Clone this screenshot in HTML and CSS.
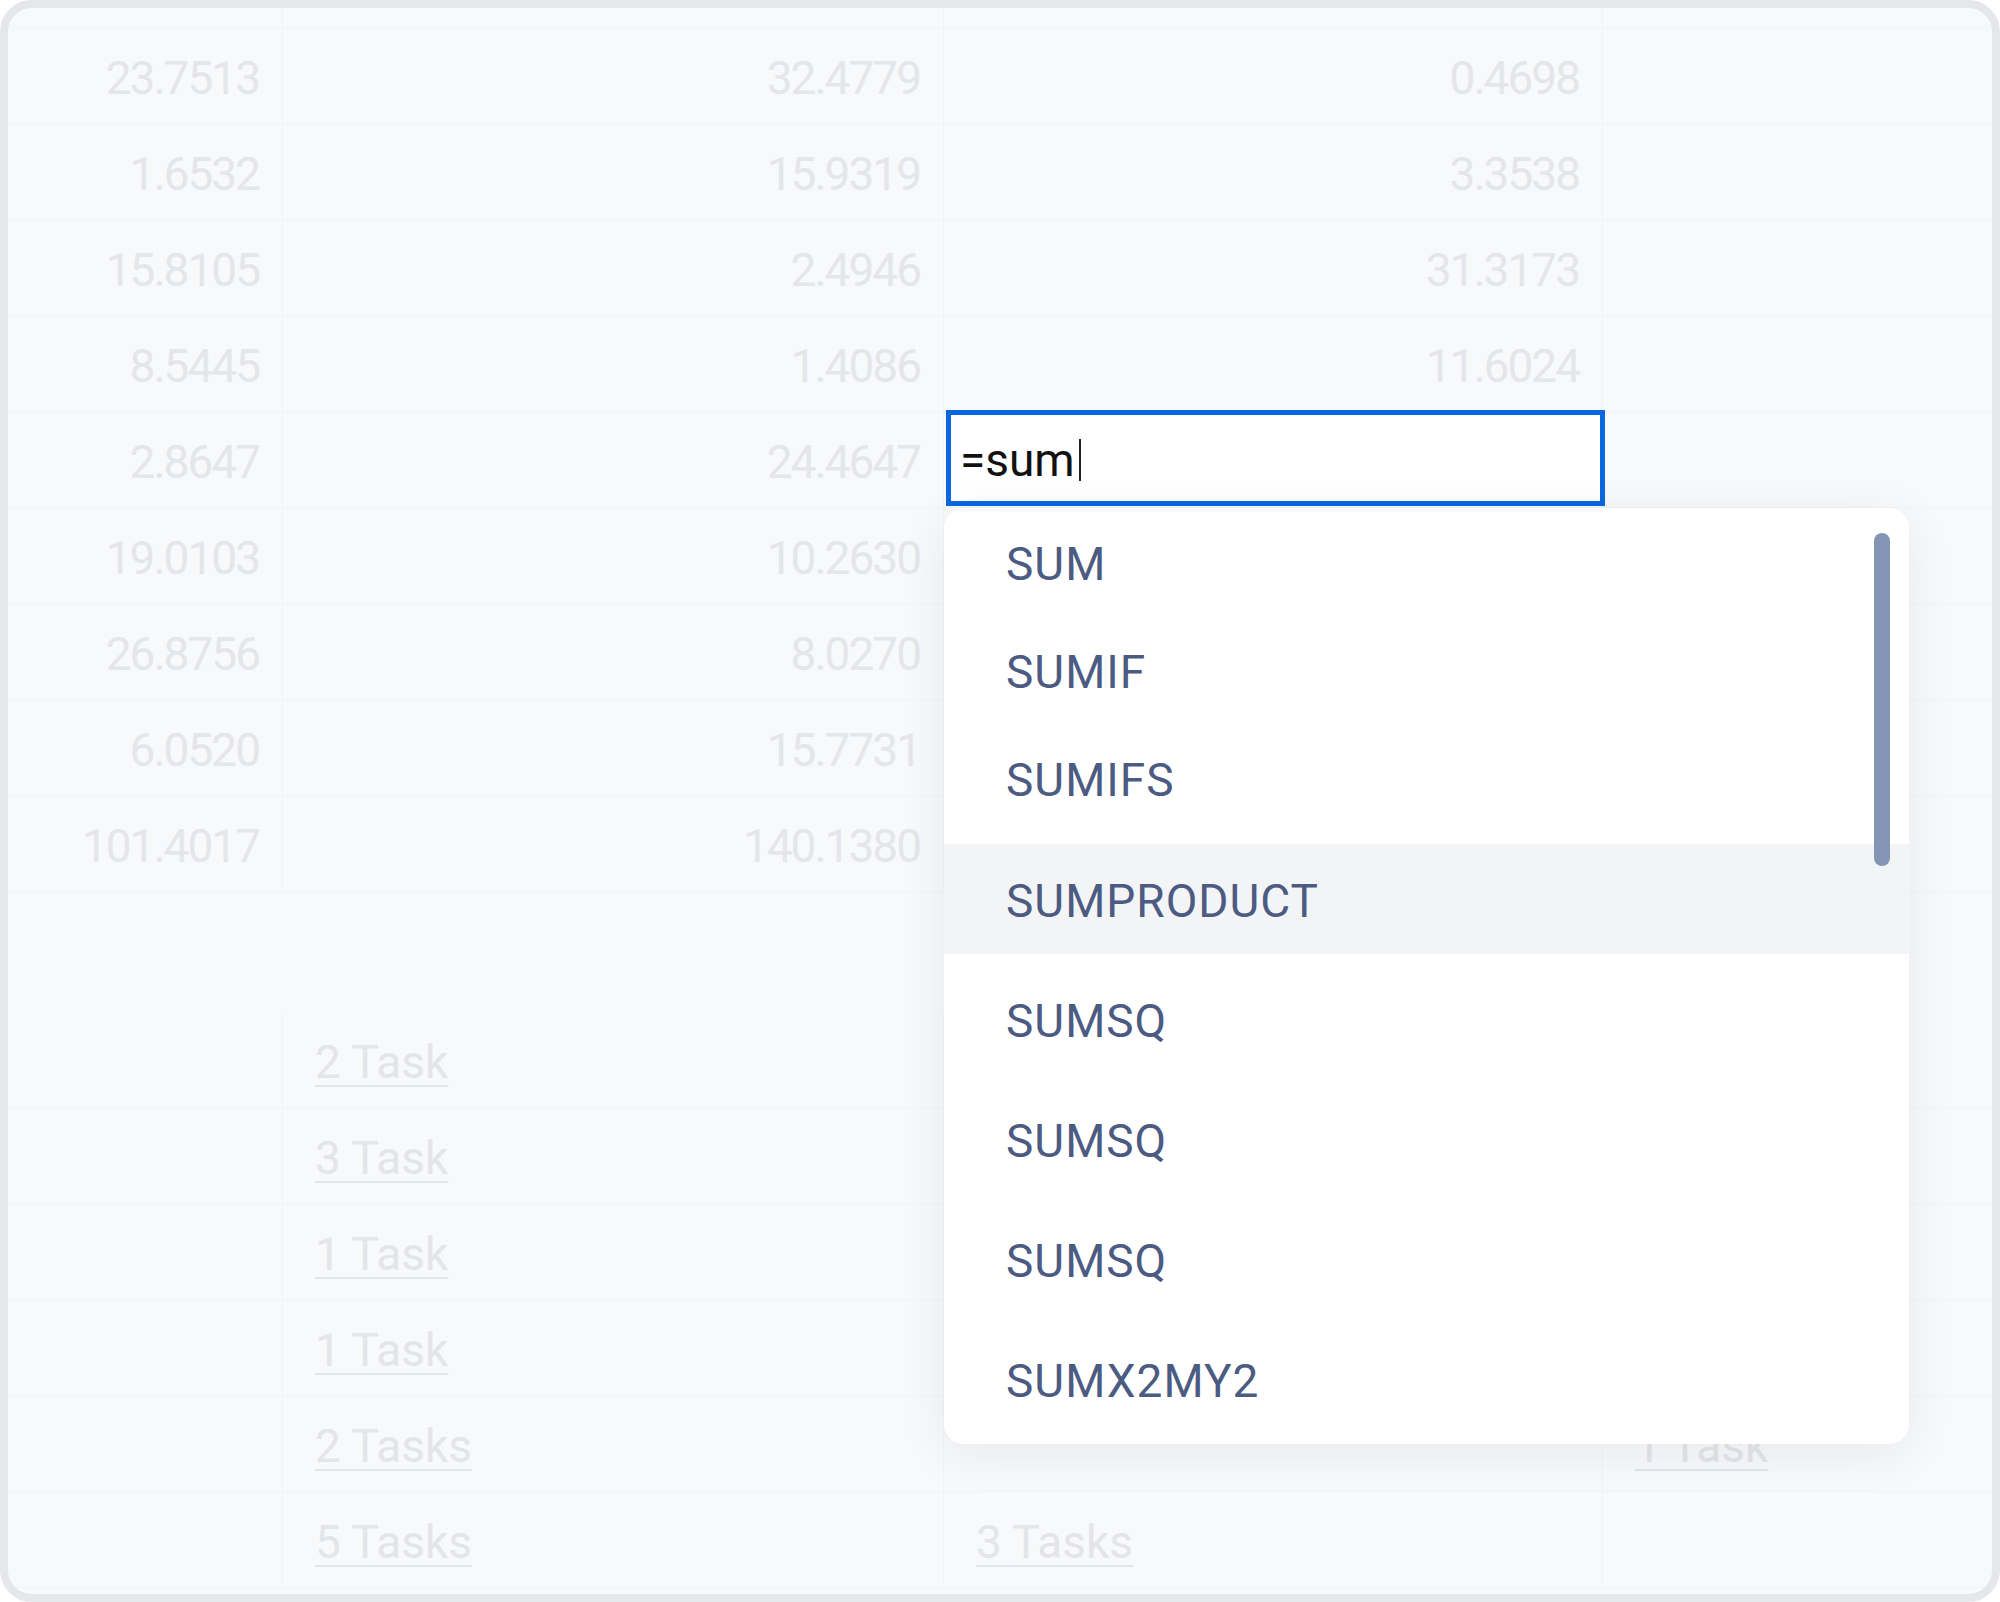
FILE: index.html
```html
<!DOCTYPE html>
<html lang="en">
<head>
    <meta charset="UTF-8">
    <meta name="viewport" content="width=device-width, initial-scale=1.0">
    <title>Sheet - formula suggest</title>
    <link rel="stylesheet" href="styles.css">
</head>
<body>
    <div class="frame">
        <div class="sheet">
            <div class="row row-cut">
                <div class="cell"></div><div class="cell"></div><div class="cell"></div><div class="cell"></div>
            </div>
            <div class="row">
                <div class="cell num">23.7513</div><div class="cell num">32.4779</div><div class="cell num">0.4698</div><div class="cell"></div>
            </div>
            <div class="row">
                <div class="cell num">1.6532</div><div class="cell num">15.9319</div><div class="cell num">3.3538</div><div class="cell"></div>
            </div>
            <div class="row">
                <div class="cell num">15.8105</div><div class="cell num">2.4946</div><div class="cell num">31.3173</div><div class="cell"></div>
            </div>
            <div class="row">
                <div class="cell num">8.5445</div><div class="cell num">1.4086</div><div class="cell num">11.6024</div><div class="cell"></div>
            </div>
            <div class="row">
                <div class="cell num">2.8647</div><div class="cell num">24.4647</div><div class="cell num"></div><div class="cell"></div>
            </div>
            <div class="row">
                <div class="cell num">19.0103</div><div class="cell num">10.2630</div><div class="cell num">7.9012</div><div class="cell"></div>
            </div>
            <div class="row">
                <div class="cell num">26.8756</div><div class="cell num">8.0270</div><div class="cell num">4.1187</div><div class="cell"></div>
            </div>
            <div class="row">
                <div class="cell num">6.0520</div><div class="cell num">15.7731</div><div class="cell num">12.0455</div><div class="cell"></div>
            </div>
            <div class="row">
                <div class="cell num">101.4017</div><div class="cell num">140.1380</div><div class="cell num">102.2131</div><div class="cell"></div>
            </div>

            <div class="group-gap"></div>

            <div class="row">
                <div class="cell"></div><div class="cell"><a class="task" href="#">2 Task</a></div><div class="cell"></div><div class="cell"></div>
            </div>
            <div class="row">
                <div class="cell"></div><div class="cell"><a class="task" href="#">3 Task</a></div><div class="cell"></div><div class="cell"></div>
            </div>
            <div class="row">
                <div class="cell"></div><div class="cell"><a class="task" href="#">1 Task</a></div><div class="cell"></div><div class="cell"></div>
            </div>
            <div class="row">
                <div class="cell"></div><div class="cell"><a class="task" href="#">1 Task</a></div><div class="cell"></div><div class="cell"></div>
            </div>
            <div class="row">
                <div class="cell"></div><div class="cell"><a class="task" href="#">2 Tasks</a></div><div class="cell"></div><div class="cell"><a class="task" href="#">1 Task</a></div>
            </div>
            <div class="row">
                <div class="cell"></div><div class="cell"><a class="task" href="#">5 Tasks</a></div><div class="cell"><a class="task" href="#">3 Tasks</a></div><div class="cell"></div>
            </div>

            <!-- cell editor + formula list -->
            <div class="editor">=sum<span class="caret"></span></div>

            <div class="suggest">
                <div class="opt">SUM</div>
                <div class="opt">SUMIF</div>
                <div class="opt">SUMIFS</div>
                <div class="opt opt-wide active">SUMPRODUCT</div>
                <div class="opt opt-wide">SUMSQ</div>
                <div class="opt opt-wide">SUMSQ</div>
                <div class="opt opt-wide">SUMSQ</div>
                <div class="opt opt-wide">SUMX2MY2</div>
                <div class="thumb"></div>
            </div>
        </div>
    </div>
</body>
</html>
```

FILE: styles.css
```css
body {
    margin: 0;
    background-color: #ffffff;
    font-family: Roboto, 'Noto Sans', Arial, sans-serif;
}

.frame {
    width: 2000px;
    height: 1602px;
    box-sizing: border-box;
    border: 8px solid #e6e7eb;
    border-radius: 32px;
    background-color: #f8f9fb;
    overflow: hidden;
}

.sheet {
    position: relative;
    height: 100%;
    overflow: hidden;
}

/* grid rows ---------------------------------------- */
.row {
    display: grid;
    grid-template-columns: 275px 661px 659px 1fr;
    height: 96px;
    box-sizing: border-box;
    border-bottom: 1px solid #f2f3f6;
}

.row-cut {
    height: 20px;
}

.group-gap {
    height: 120px;
}

.cell {
    box-sizing: border-box;
    border-right: 1px solid #f2f3f6;
    display: flex;
    align-items: center;
    padding-top: 5px;
    font-size: 46px;
    color: #e5e6ea;
}

.cell:last-child {
    border-right: none;
}

.num {
    justify-content: flex-end;
    padding-right: 23px;
    letter-spacing: -2px;
}

.task {
    margin-left: 32px;
    color: #e4e5e9;
    text-decoration: underline;
    text-decoration-thickness: 2px;
    text-underline-offset: 7px;
}

/* editor ---------------------------------------- */
.editor {
    position: absolute;
    left: 938px;
    top: 402px;
    width: 659px;
    height: 96px;
    box-sizing: border-box;
    border: 5px solid #0b66e1;
    background-color: #ffffff;
    display: flex;
    align-items: center;
    padding-left: 9px;
    padding-top: 3px;
    font-size: 46px;
    color: #111111;
}

.caret {
    display: inline-block;
    width: 2px;
    height: 42px;
    margin-left: 4px;
    background-color: #222222;
}

/* suggestions ---------------------------------------- */
.suggest {
    position: absolute;
    left: 936px;
    top: 500px;
    width: 965px;
    height: 936px;
    box-sizing: border-box;
    background-color: #ffffff;
    border-radius: 20px;
    box-shadow: 0 10px 50px rgba(17, 24, 39, 0.07);
    overflow: hidden;
}

.opt {
    height: 108px;
    box-sizing: border-box;
    display: flex;
    align-items: center;
    padding-left: 62px;
    padding-top: 4px;
    font-size: 46px;
    letter-spacing: 1px;
    color: #4b5b82;
}

.opt-wide {
    height: 110px;
    margin-top: 10px;
}

.opt.active {
    margin-top: 12px;
    background-color: #f3f4f6;
}

.thumb {
    position: absolute;
    top: 25px;
    right: 19px;
    width: 16px;
    height: 333px;
    border-radius: 8px;
    background-color: #8494b4;
}
```
